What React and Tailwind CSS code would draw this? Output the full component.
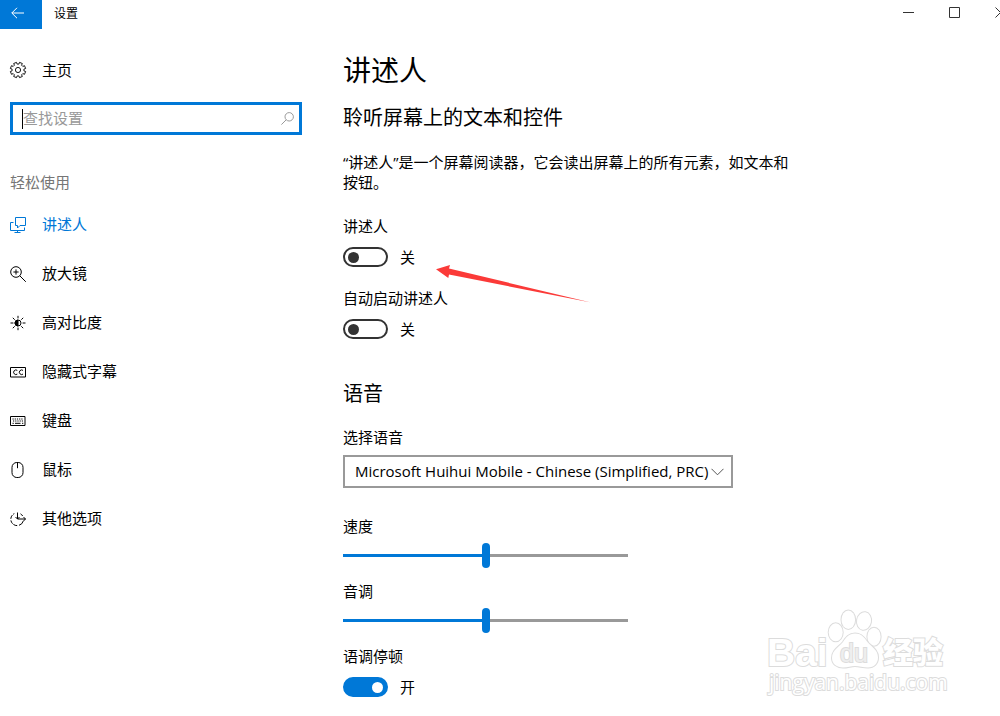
import React, { useState } from 'react';

// Outline of the gear: eight teeth on a 16x16 box
const gearPoints = Array.from({ length: 8 })
  .flatMap((_, i) => {
    const mid = (i * Math.PI) / 4 + Math.PI / 8;
    return [
      [-0.24, 6],
      [-0.2, 7.8],
      [0.2, 7.8],
      [0.24, 6]
    ].map(([offset, r]) => `${8 + r * Math.cos(mid + offset)},${8 + r * Math.sin(mid + offset)}`);
  })
  .join(' ');

const icons = {
  home: (
    <>
      <polygon points={gearPoints} strokeLinejoin="round" strokeWidth=".9" />
      <circle cx="8" cy="8" r="2.6" strokeWidth=".9" />
    </>
  ),
  narrator: (
    <>
      <path d="M3.500 5.500H.5v8h14V10.500" />
      <path d="M5.500.5h10v8h-5.500l-2.500 2.500V8.500h-2z" />
      <path d="M4.500 15.500h6M7.500 13.500v2" />
    </>
  ),
  magnifier: (
    <>
      <circle cx="6" cy="6" r="5.3" />
      <path d="M9.8 9.8l6 6M3.4 6h5.2M6 3.4v5.2" />
    </>
  ),
  contrast: (
    <>
      <circle cx="8" cy="8" r="3" />
      <path d="M8 5a3 3 0 0 0 0 6z" fill="currentColor" />
      <path d="M8 .8v2.6M8 12.6v2.6M.5 8h2.9M12.6 8h2.9M2.8 2.8l1.9 1.9M11.3 11.3l1.9 1.9M13.2 2.8l-1.9 1.9M4.7 11.3l-1.9 1.9" />
    </>
  ),
  captions: (
    <>
      <path d="M.5 3.5h15v9.5H.5z" />
      <path d="M7.3 6.4a2.3 2.3 0 1 0 0 3.7M13 6.4a2.3 2.3 0 1 0 0 3.7" />
    </>
  ),
  keyboard: (
    <>
      <path d="M.5 3.5h14.5v9H.5z" />
      <path d="M2.5 6h11M3 8h10" strokeDasharray="1.2 1" />
      <path d="M2.5 10.3h1.3M5 10.3h5.5M12 10.3h1.3" />
    </>
  ),
  mouse: (
    <>
      <rect x="2" y=".5" width="11" height="15" rx="4.8" />
      <path d="M7.5.8v5.4" />
    </>
  ),
  other: (
    <>
      <path d="M13.3 10a6.300 6.300 0 0 1-4.300 4.300" />
      <path d="M7.200 14.600a6.300 6.300 0 0 1-6.300-5.200M.8 7.800a6.300 6.300 0 0 1 3.500-5.200M10.500 2.800a6.300 6.300 0 0 1 2.200 2.200" strokeDasharray="4 1" />
      <path d="M7.500 1.500v6.500h8M5.500 6l2 2 2-2M13.500 6l2 2-2 2" />
    </>
  )
};

const navItems = [
  { id: 'narrator', label: '讲述人' },
  { id: 'magnifier', label: '放大镜' },
  { id: 'contrast', label: '高对比度' },
  { id: 'captions', label: '隐藏式字幕' },
  { id: 'keyboard', label: '键盘' },
  { id: 'mouse', label: '鼠标' },
  { id: 'other', label: '其他选项' }
];

function Icon({ name }) {
  return (
    <svg className="size-4 shrink-0 overflow-visible" viewBox="0 0 16 16" fill="none" stroke="currentColor" strokeWidth="1" aria-hidden="true">
      {icons[name]}
    </svg>
  );
}

function TitleBar() {
  return (
    <header className="flex h-[29px] overflow-hidden">
      <button aria-label="返回" className="flex w-[42px] items-center justify-center bg-[#0078d7] pr-[7px] pb-1 text-white">
        <svg className="h-3 w-[13px]" viewBox="0 0 13 12" fill="none" stroke="currentColor" aria-hidden="true">
          <path d="M.8 6H13M6 .8L.8 6 6 11.2" />
        </svg>
      </button>
      <div className="flex-1 pl-3 text-xs leading-[27px]">设置</div>
      <div className="-mr-[23px] flex text-[#333]">
        <button aria-label="最小化" className="flex h-[25px] w-[46px] items-center justify-center">
          <svg className="size-[11px]" viewBox="0 0 11 11" stroke="currentColor" aria-hidden="true">
            <path d="M0 5.5h11" />
          </svg>
        </button>
        <button aria-label="最大化" className="flex h-[25px] w-[46px] items-center justify-center">
          <svg className="size-[11px]" viewBox="0 0 11 11" fill="none" stroke="currentColor" aria-hidden="true">
            <path d="M.5.5h10v10H.5z" />
          </svg>
        </button>
        <button aria-label="关闭" className="flex h-[25px] w-[46px] items-center justify-center">
          <svg className="size-[11px]" viewBox="0 0 11 11" stroke="currentColor" aria-hidden="true">
            <path d="M.5.5l10 10M10.5.5l-10 10" />
          </svg>
        </button>
      </div>
    </header>
  );
}

function Sidebar() {
  const [query, setQuery] = useState('');

  return (
    <aside className="w-[302px] shrink-0 pt-[17px] pl-[10px]">
      <a href="#home" className="flex h-12 items-center gap-4">
        <Icon name="home" />
        主页
      </a>
      <div className="mt-2 flex h-[33px] items-center border-[3px] border-[#0078d7] pr-[5px] pl-[6px]">
        {query === '' && <span className="ml-[3px] h-5 w-px shrink-0 bg-black" />}
        <input
          type="text"
          aria-label="查找设置"
          placeholder="查找设置"
          value={query}
          onChange={(e) => setQuery(e.target.value)}
          className="min-w-0 flex-1 bg-transparent outline-none placeholder:text-[#999]"
        />
        <svg className="size-[13px] shrink-0" viewBox="0 0 13 13" fill="none" stroke="#999" aria-hidden="true">
          <circle cx="8.2" cy="4.8" r="4.2" />
          <path d="M5.2 7.8L.4 12.6" />
        </svg>
      </div>
      <h2 className="mt-[35px] leading-6 text-[#767676]">轻松使用</h2>
      <nav className="mt-[6px]">
        {navItems.map((item) => (
          <a
            key={item.id}
            href={`#${item.id}`}
            className={`flex h-[49px] items-center gap-4 ${item.id === 'narrator' ? 'text-[#0078d7]' : ''}`}
          >
            <Icon name={item.id} />
            {item.label}
          </a>
        ))}
      </nav>
    </aside>
  );
}

function Toggle({ id, label, defaultOn = false, children }) {
  const [on, setOn] = useState(defaultOn);

  return (
    <div>
      <label htmlFor={id} className="block leading-5">{label}</label>
      <div className="relative mt-[11px] flex h-5 items-center gap-3">
        <input
          id={id}
          type="checkbox"
          role="switch"
          checked={on}
          onChange={(e) => setOn(e.target.checked)}
          className="flex h-5 w-[45px] appearance-none items-center rounded-full border-2 border-[#333] px-[3px] before:size-[11px] before:rounded-full before:bg-[#333] checked:justify-end checked:border-[#0078d7] checked:bg-[#0078d7] checked:before:bg-white"
        />
        <span>{on ? '开' : '关'}</span>
        {children}
      </div>
    </div>
  );
}

function Slider({ id, label }) {
  const [value, setValue] = useState(50);

  return (
    <div>
      <label htmlFor={id} className="block leading-5">{label}</label>
      <input
        id={id}
        type="range"
        value={value}
        onChange={(e) => setValue(Number(e.target.value))}
        style={{ backgroundImage: `linear-gradient(to right, #0078d7 ${value}%, #999 ${value}%)` }}
        className="mt-[7px] block h-[25px] w-[285px] appearance-none bg-[length:100%_3px] bg-center bg-no-repeat [&::-webkit-slider-thumb]:h-[25px] [&::-webkit-slider-thumb]:w-2 [&::-webkit-slider-thumb]:appearance-none [&::-webkit-slider-thumb]:rounded-full [&::-webkit-slider-thumb]:bg-[#0078d7]"
      />
    </div>
  );
}

function Arrow() {
  return (
    <svg className="pointer-events-none absolute top-[17px] left-[93px] h-10 w-[156px]" viewBox="0 0 156 40" fill="#fb3a38" aria-hidden="true">
      <path d="M0 5.3L14 1l-1 3.5L155 38.5 13 10.5l-.7 3.4z" />
    </svg>
  );
}

function Watermark() {
  return (
    <svg
      className="pointer-events-none absolute right-[45px] bottom-[14px] h-[97px] w-[190px]"
      viewBox="0 0 190 97"
      fill="#fff"
      stroke="#dcdcdc"
      strokeWidth="2"
      paintOrder="stroke"
    >
      <text x="2" y="60" fontSize="39" fontWeight="700" fontFamily="Liberation Sans, sans-serif">Bai</text>
      <text x="118" y="57" fontSize="30" fontWeight="900" fontFamily="Noto Sans CJK SC, sans-serif">经验</text>
      <text x="4" y="84" fontSize="21" fontFamily="Open Sans, sans-serif">jingyan.baidu.com</text>
      <g strokeWidth="2">
        <ellipse cx="70.7" cy="26.3" rx="7" ry="9" />
        <ellipse cx="83.3" cy="13.7" rx="6.8" ry="9.2" />
        <ellipse cx="99" cy="15" rx="7" ry="8.8" transform="rotate(10 99 15)" />
        <ellipse cx="109" cy="30.7" rx="6.6" ry="9" />
        <path d="M90 27.5c-6 0-9 4-12 8.500-4 5-11 8-11 16 0 6 5 9.500 11 9.500 5 0 8-1.500 12-1.500s8 1.500 13 1.500c6 0 10-4 10-10 0-8-7-11-11-16-3-4.500-6-8-12-8z" />
      </g>
      <text x="75" y="56" fontSize="25" fill="#eee" fontFamily="Liberation Sans, sans-serif">du</text>
    </svg>
  );
}

function NarratorSettings() {
  return (
    <main className="min-w-0 flex-1 pt-[23px] pb-5 pl-[41px]">
      <h1 className="text-[28px] leading-9">讲述人</h1>
      <h2 className="mt-4 text-xl leading-7">聆听屏幕上的文本和控件</h2>
      <p className="mt-5 max-w-[460px] leading-5">
        “讲述人”是一个屏幕阅读器，它会读出屏幕上的所有元素，如文本和按钮。
      </p>
      <div className="mt-6 flex flex-col gap-[21px]">
        <Toggle id="narrator-on" label="讲述人">
          <Arrow />
        </Toggle>
        <Toggle id="narrator-autostart" label="自动启动讲述人" />
      </div>

      <h2 className="mt-[41px] text-xl leading-7">语音</h2>
      <label htmlFor="voice" className="mt-[19px] block leading-5">选择语音</label>
      <div className="relative mt-2 w-[390px] max-w-full">
        <select id="voice" className="block h-[33px] w-full appearance-none border-2 border-[#999] bg-white pl-[10px]">
          <option>Microsoft Huihui Mobile - Chinese (Simplified, PRC)</option>
        </select>
        <svg className="pointer-events-none absolute top-[13px] right-[9px] h-2 w-[13px]" viewBox="0 0 13 8" fill="none" stroke="#555" aria-hidden="true">
          <path d="M.5.8l6 6 6-6" />
        </svg>
      </div>

      <div className="mt-7 flex flex-col gap-[13px]">
        <Slider id="speed" label="速度" />
        <Slider id="pitch" label="音调" />
        <Toggle id="intonation-pause" label="语调停顿" defaultOn />
      </div>
    </main>
  );
}

function App() {
  return (
    <div className="relative min-h-screen overflow-hidden bg-white font-['Open_Sans','Noto_Sans_CJK_SC',sans-serif] text-[15px] text-black">
      <TitleBar />
      <div className="flex">
        <Sidebar />
        <NarratorSettings />
      </div>
      <Watermark />
    </div>
  );
}

export default App;
